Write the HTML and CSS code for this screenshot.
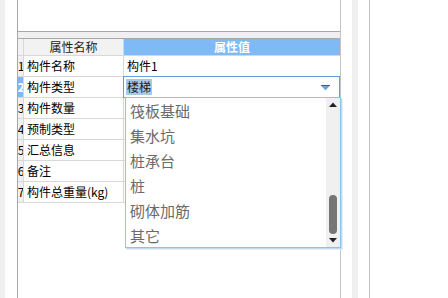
FILE: index.html
```html
<!DOCTYPE html>
<html>
<head>
<meta charset="utf-8">
<link rel="stylesheet" href="styles.css">
</head>
<body>
<div class="page">
  <div class="lstrip"></div>
  <div class="gap1"></div>
  <div class="panel">
    <div class="topbox"></div>
    <div class="band"></div>
    <div class="grid">
      <div class="row head">
        <div class="c num"></div>
        <div class="c name">属性名称</div>
        <div class="c val">属性值</div>
      </div>
      <div class="row">
        <div class="c num">1</div>
        <div class="c name">构件名称</div>
        <div class="c val">构件1</div>
      </div>
      <div class="row">
        <div class="c num sel">2</div>
        <div class="c name">构件类型</div>
        <div class="c val combo-cell">
          <div class="combo">
            <span class="picked">楼梯</span>
            <svg class="caret" width="9" height="6" viewBox="0 0 9 6"><rect x="0" y="0" width="9" height="1" fill="#3f5f7f"/><polygon points="0.5,1 8.5,1 4.5,5.5" fill="#6aa6d8"/></svg>
          </div>
        </div>
      </div>
      <div class="row">
        <div class="c num">3</div>
        <div class="c name">构件数量</div>
        <div class="c val"></div>
      </div>
      <div class="row">
        <div class="c num">4</div>
        <div class="c name">预制类型</div>
        <div class="c val"></div>
      </div>
      <div class="row">
        <div class="c num">5</div>
        <div class="c name">汇总信息</div>
        <div class="c val"></div>
      </div>
      <div class="row">
        <div class="c num">6</div>
        <div class="c name">备注</div>
        <div class="c val"></div>
      </div>
      <div class="row">
        <div class="c num">7</div>
        <div class="c name">构件总重量(kg)</div>
        <div class="c val"></div>
      </div>
      <div class="dropdown">
        <ul class="items">
          <li>筏板基础</li>
          <li>集水坑</li>
          <li>桩承台</li>
          <li>桩</li>
          <li>砌体加筋</li>
          <li>其它</li>
        </ul>
        <div class="sbar">
          <svg class="arr" width="8" height="5" viewBox="0 0 8 5"><polygon points="0,5 8,5 4,0.5" fill="#222"/></svg>
          <div class="track"><div class="thumb"></div></div>
          <svg class="arr" width="8" height="5" viewBox="0 0 8 5"><polygon points="0,0 8,0 4,4.5" fill="#222"/></svg>
        </div>
      </div>
    </div>
  </div>
  <div class="gap2"></div>
  <div class="vstrip"></div>
  <div class="gap3"></div>
  <div class="vline"></div>
  <div class="rest"></div>
</div>
</body>
</html>
```
FILE: styles.css
```css
html, body {
  margin: 0;
  padding: 0;
  background: #ffffff;
}
body {
  font-family: "Noto Sans CJK SC", "Noto Sans", sans-serif;
  font-size: 12px;
  color: #000;
}
.page {
  display: flex;
  width: 448px;
  height: 298px;
  overflow: hidden;
}
.lstrip {
  width: 5px;
  background: #f0f0f0;
  flex: none;
}
.gap1 { width: 12px; flex: none; }
.panel {
  width: 322px;
  flex: none;
  border-left: 1px solid #a8a8a8;
  border-right: 1px solid #c4c4c4;
  display: flex;
  flex-direction: column;
}
.topbox {
  height: 31px;
  border-bottom: 1px solid #a8a8a8;
  background: #fff;
}
.band {
  height: 6px;
  background: #f0f0f0;
}
.grid {
  position: relative;
  flex: 1;
  border-top: 1px solid #a8a8a8;
}
.row {
  display: grid;
  grid-template-columns: 6px 100px 1fr;
  height: 20px;
  border-bottom: 1px solid #d8d8d8;
}
.row.head {
  height: 16px;
}
.c {
  border-right: 1px solid #d8d8d8;
  display: flex;
  align-items: center;
  white-space: nowrap;
  overflow: hidden;
  line-height: 1;
}
.c.val { border-right: none; padding-left: 3px; }
.c.name { padding-left: 3px; }
.c.num {
  background: #f0f0f0;
  font-size: 12px;
  justify-content: center;
  padding-left: 1px;
}
.c.num.sel {
  background: #7db8f4;
  color: #fff;
  font-weight: bold;
}
.head .c.num, .head .c.name {
  background: #f2f2f2;
}
.head .c.name {
  justify-content: center;
  padding-left: 0;
  color: #222;
}
.head .c.val {
  background: #7fb9f6;
  color: #fff;
  justify-content: center;
  padding-left: 0;
  font-weight: bold;
}
.combo-cell {
  position: relative;
  overflow: visible;
}
.combo {
  position: absolute;
  top: -1px;
  left: -1px;
  right: 0;
  bottom: -1px;
  border: 1px solid #5e9fe0;
  display: flex;
  align-items: center;
  padding-left: 2px;
  background: #fff;
}
.picked {
  background: #a9c8ea;
  color: #1a1a1a;
  padding: 2px 1px;
}
.caret {
  position: absolute;
  right: 9px;
  top: 8px;
}
.dropdown {
  position: absolute;
  left: 107px;
  top: 58px;
  width: 214px;
  height: 149px;
  border: 1px solid #8ac6e4;
  background: #fff;
  box-shadow: 1px 1px 0 #c4d9ea, 2px 2px 0 #e4edf4;
  display: flex;
  z-index: 2;
}
.items {
  list-style: none;
  margin: 0;
  padding: 0;
  flex: 1;
}
.items li {
  height: 25px;
  line-height: 25px;
  font-size: 15px;
  color: #6a6a6a;
  padding-left: 4px;
  white-space: nowrap;
}
.sbar {
  width: 14px;
  background: #f0f0f0;
  display: flex;
  flex-direction: column;
  align-items: center;
  padding: 4px 0 4px;
  box-sizing: border-box;
}
.arr { flex: none; display: block; }
.track {
  flex: 1;
  width: 8px;
  display: flex;
  flex-direction: column;
  justify-content: flex-end;
  padding-bottom: 4px;
}
.thumb {
  height: 39px;
  background: #767676;
  border-radius: 4px;
}
.gap2 { width: 11px; flex: none; }
.vstrip { width: 6px; background: #f0f0f0; flex: none; }
.gap3 { width: 11px; flex: none; }
.vline { width: 1px; background: #c4c4c4; flex: none; }
.rest { flex: 1; }
```
